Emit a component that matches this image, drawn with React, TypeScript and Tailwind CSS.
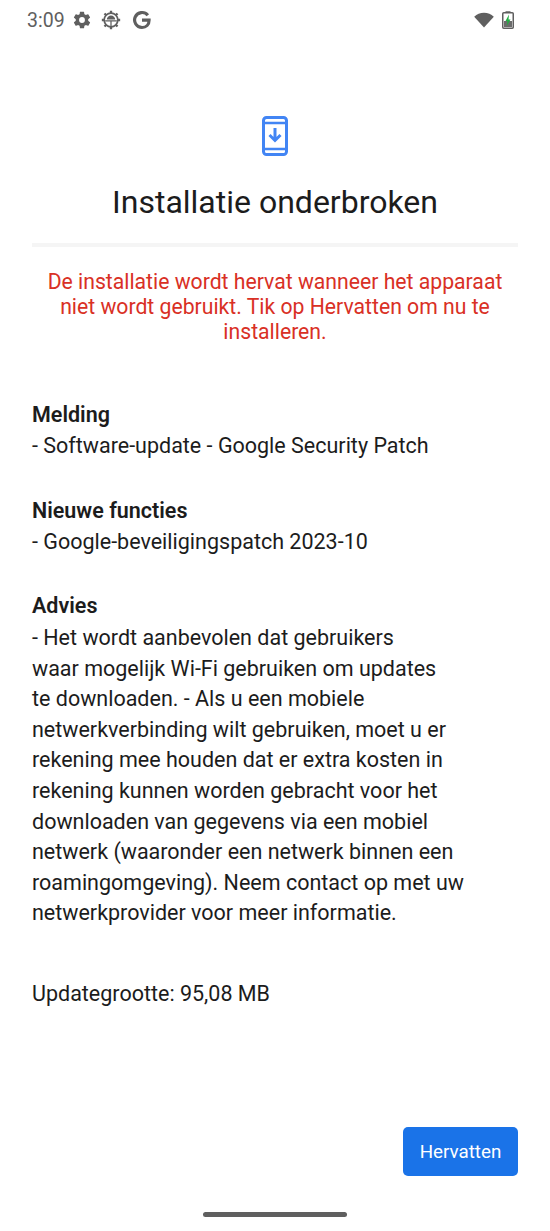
const RED_LINES = [
  'De installatie wordt hervat wanneer het apparaat',
  'niet wordt gebruikt. Tik op Hervatten om nu te',
  'installeren.',
];

const ADVIES_LINES = [
  '- Het wordt aanbevolen dat gebruikers',
  'waar mogelijk Wi-Fi gebruiken om updates',
  'te downloaden. - Als u een mobiele',
  'netwerkverbinding wilt gebruiken, moet u er',
  'rekening mee houden dat er extra kosten in',
  'rekening kunnen worden gebracht voor het',
  'downloaden van gegevens via een mobiel',
  'netwerk (waaronder een netwerk binnen een',
  'roamingomgeving). Neem contact op met uw',
  'netwerkprovider voor meer informatie.',
];

function StatusBar() {
  return (
    <div className="flex h-[40px] items-center justify-between pl-[27px] pr-[36px] text-[#5f5f5f]">
      <div className="flex items-center">
        <span className="w-[37px] pt-[1px] text-[19.500px] leading-none whitespace-nowrap">3:09</span>
        {/* instellingen */}
        <svg viewBox="0 0 24 24" className="ml-[8px] h-[20px] w-[20px]" fill="currentColor">
          <path d="M19.4 13c.04-.32.1-.66.1-1s-.06-.68-.1-1l2.100-1.650c.2-.15.25-.42.13-.64l-2-3.460c-.12-.22-.39-.3-.61-.22l-2.490 1c-.52-.4-1.080-.73-1.690-.98l-.38-2.650A.49.49 0 0 0 14 2h-4c-.25 0-.46.18-.49.42l-.38 2.650c-.61.25-1.170.59-1.690.98l-2.490-1c-.23-.09-.49 0-.61.22l-2 3.460c-.13.22-.07.49.12.64L4.570 11c-.04.32-.07.66-.07 1s.03.68.07 1l-2.110 1.650c-.19.15-.25.42-.12.64l2 3.460c.12.22.39.3.61.22l2.490-1c.52.4 1.080.73 1.690.98l.38 2.650c.03.24.24.42.49.42h4c.25 0 .46-.18.49-.42l.38-2.650c.61-.25 1.170-.59 1.690-.98l2.490 1c.23.09.49 0 .61-.22l2-3.460c.12-.22.07-.49-.13-.64L19.400 13ZM12 15.500a3.500 3.500 0 1 1 0-7 3.500 3.500 0 0 1 0 7Z" />
        </svg>
        {/* update-tandwiel met android */}
        <svg viewBox="0 0 24 24" className="ml-[9px] h-[20px] w-[20px]" fill="none" stroke="currentColor">
          <circle cx="12" cy="12" r="8.200" strokeWidth="2" />
          <path d="M12 1v3M12 20v3M1 12h3M20 12h3M4.200 4.200l2.100 2.100M17.700 17.700l2.100 2.100M4.200 19.800l2.100-2.100M17.700 6.300l2.100-2.100" strokeWidth="2.800" />
          <path d="M5 13h14M12 13v7" strokeWidth="1.500" />
          <path d="M7 11.500a5 5 0 0 1 10 0Z" fill="currentColor" stroke="none" />
        </svg>
        {/* G-logo */}
        <svg viewBox="0 0 24 24" className="ml-[11px] h-[20px] w-[20px]" fill="none" stroke="currentColor" strokeWidth="3.800">
          <path d="M19 6.200A9 9 0 1 0 12 21c5 0 8.500-3.500 8.500-8.800H12" />
        </svg>
      </div>
      <div className="flex items-center">
        {/* wifi */}
        <svg viewBox="0 0 20 16" className="h-[16px] w-[20px]" fill="currentColor">
          <path d="M10 15.500 0.200 4.800C2.800 2.200 6.200 0.700 10 0.700s7.200 1.500 9.800 4.100L10 15.500Z" />
        </svg>
        {/* batterij laadt */}
        <svg viewBox="0 0 12 18" className="ml-[8px] h-[18px] w-[12px]">
          <rect x="3.500" y="0" width="5" height="2" fill="#8a8a8a" />
          <rect x="0.750" y="1.750" width="10.500" height="15.500" rx="1" fill="#fff" stroke="#5f5f5f" strokeWidth="1.500" />
          <rect x="2" y="10" width="8" height="6" fill="#6b6b6b" />
          <path d="M7 3.500 3.500 10h2l-.8 5L8.500 8.500h-2L7 3.500Z" fill="#1fb141" />
        </svg>
      </div>
    </div>
  );
}

export default function App() {
  return (
    <div className="flex h-[1231px] w-[550px] flex-col overflow-hidden bg-white font-['Roboto',sans-serif] text-[#1c1c1c]">
      <StatusBar />

      <div className="flex flex-col items-center pt-[76px]">
        {/* telefoon met pijl */}
        <svg viewBox="0 0 26 40" className="h-[40px] w-[26px]" fill="none">
          <rect x="1.500" y="1.500" width="23" height="37" rx="3" stroke="#4285f4" strokeWidth="3" />
          <path d="M2 7h22M2 33h22" stroke="#4285f4" strokeWidth="2.500" />
          <path d="M13 12v12M7.500 19l5.500 5.500 5.500-5.500" stroke="#4285f4" strokeWidth="3" />
        </svg>
        <h1 className="mt-[24px] text-[32px] leading-[44px] font-normal">
          Installatie onderbroken
        </h1>
      </div>

      <div className="mx-[32px] mt-[19px] h-[4px] bg-[#f5f5f5]" />

      <div className="mx-[32px] mt-[22px] text-center text-[21.200px] leading-[25px] text-[#d93025]">
        {RED_LINES.map((line) => (
          <div key={line} className="whitespace-nowrap">{line}</div>
        ))}
      </div>

      <div className="mx-[32px] mt-[56px] text-[21.500px] leading-[30.600px]">
        <div className="font-semibold">Melding</div>
        <div>- Software-update - Google Security Patch</div>
        <div className="mt-[35px] font-semibold">Nieuwe functies</div>
        <div>- Google-beveiligingspatch 2023-10</div>
        <div className="mt-[34px] font-semibold">Advies</div>
        <div className="mt-[1px]">
          {ADVIES_LINES.map((line) => (
            <div key={line}>{line}</div>
          ))}
        </div>
        <div className="mt-[50px]">Updategrootte: 95,08 MB</div>
      </div>

      <div className="mt-auto flex justify-end px-[32px]">
        <button className="h-[49px] w-[115px] rounded-[5px] bg-[#1a73e8] pt-[1px] text-[18.800px] text-white">
          Hervatten
        </button>
      </div>

      <div className="flex justify-center pt-[36px] pb-[14px]">
        <div className="h-[5px] w-[144px] rounded-full bg-[#5f5f5f]" />
      </div>
    </div>
  );
}
